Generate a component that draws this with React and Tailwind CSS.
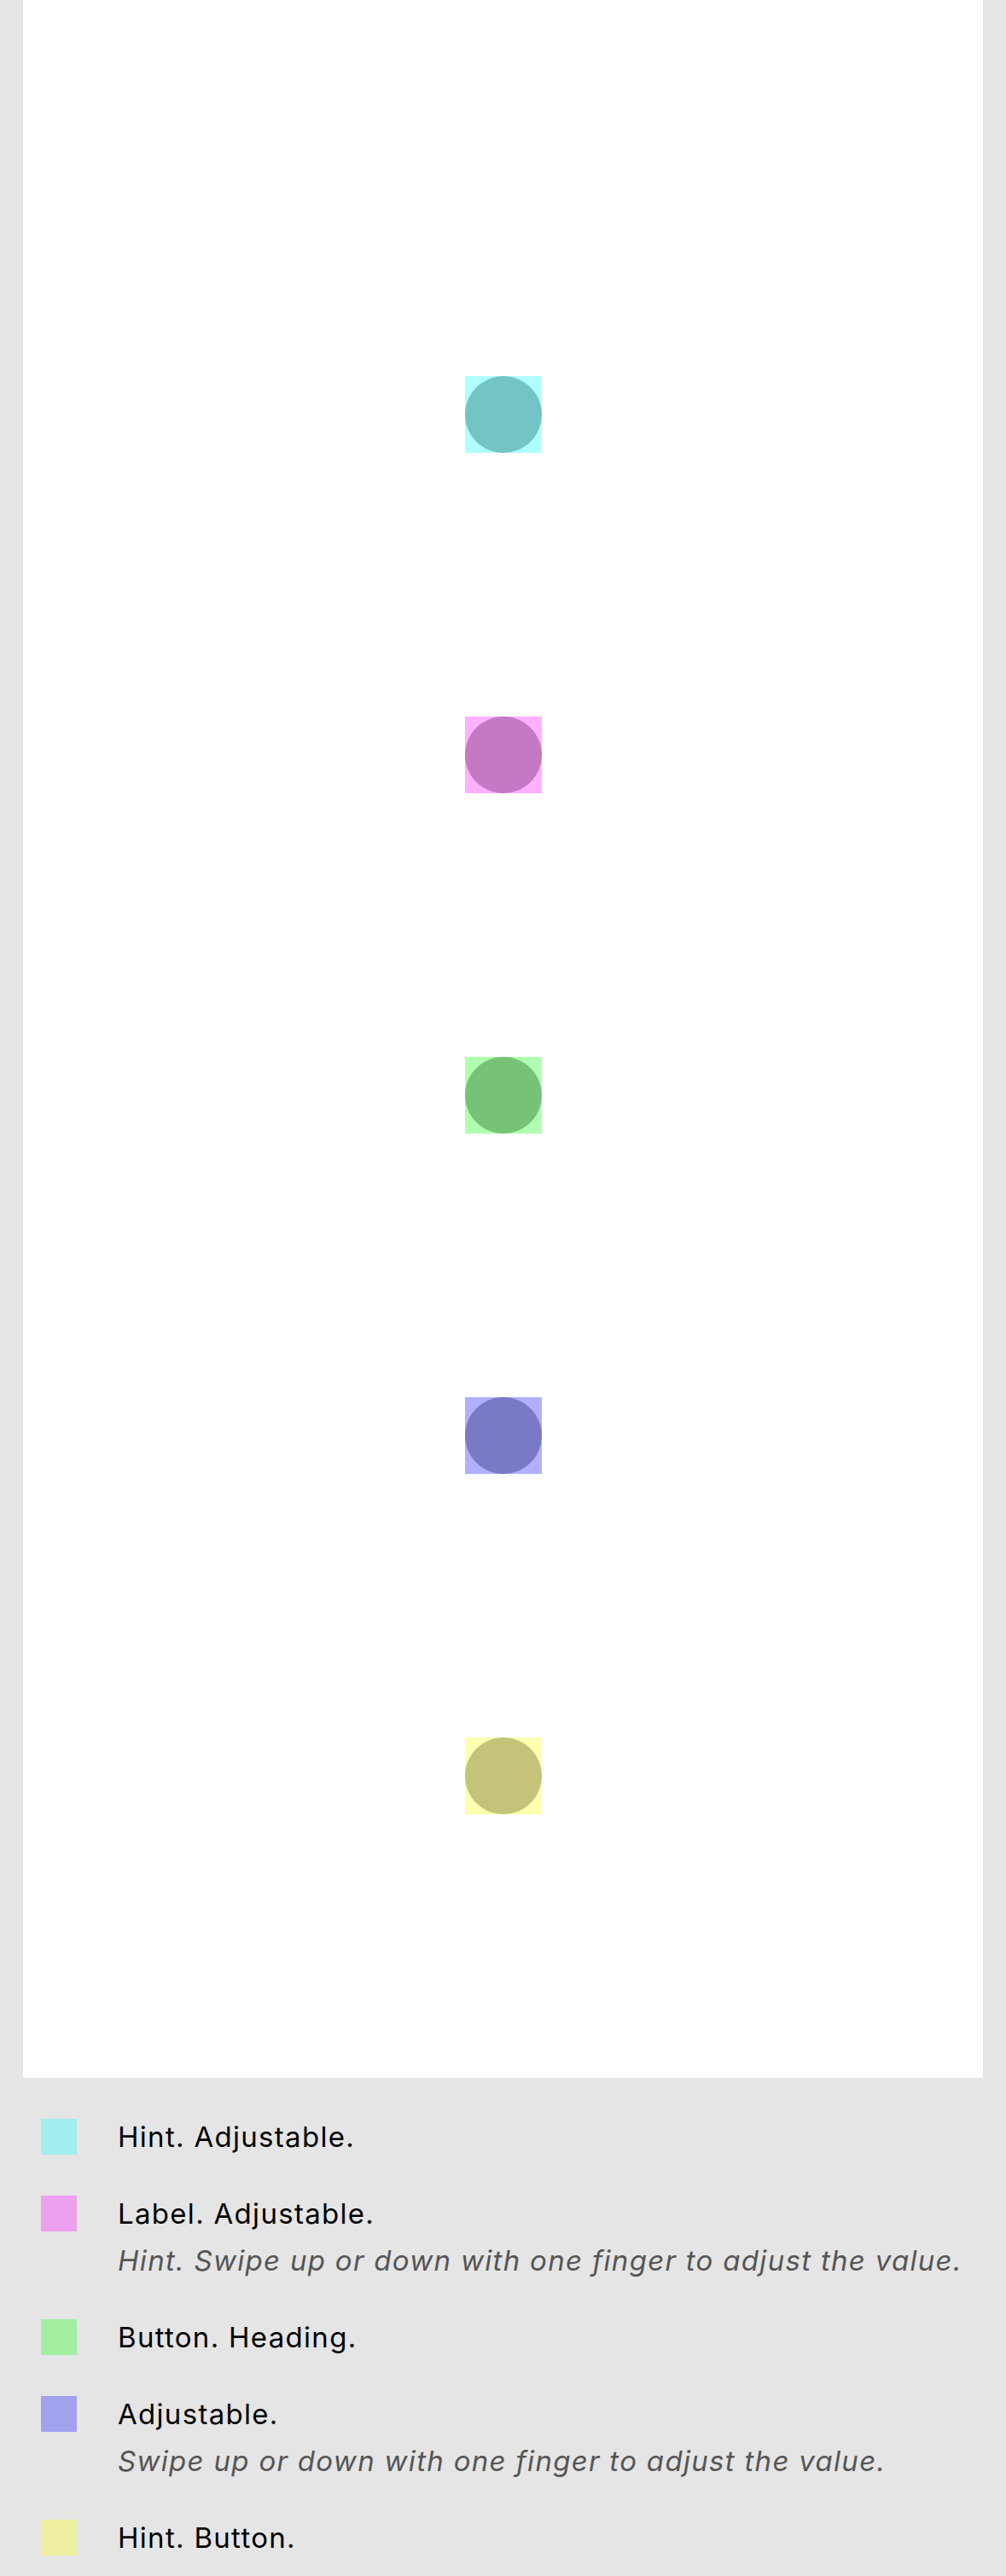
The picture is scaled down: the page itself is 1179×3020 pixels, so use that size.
import React from "react";

const targets = [
  { sq: "bg-[#b0ffff]", dot: "bg-[#73c4c4]" },
  { sq: "bg-[#ffb0ff]", dot: "bg-[#c379c3]" },
  { sq: "bg-[#b0ffb0]", dot: "bg-[#77c277]" },
  { sq: "bg-[#b0b0ff]", dot: "bg-[#7979c6]" },
  { sq: "bg-[#ffffb0]", dot: "bg-[#c3c379]" },
];

const legend = [
  { sw: "bg-[#a1eeee]", label: "Hint. Adjustable." },
  { sw: "bg-[#eda0ed]", label: "Label. Adjustable.", hint: "Hint. Swipe up or down with one finger to adjust the value." },
  { sw: "bg-[#a1eea1]", label: "Button. Heading." },
  { sw: "bg-[#a1a1ee]", label: "Adjustable.", hint: "Swipe up or down with one finger to adjust the value." },
  { sw: "bg-[#eeeea0]", label: "Hint. Button." },
];

export default function App() {
  return (
    <div
      className="w-[1179px] min-h-[3020px] bg-[#e5e5e5]"
      style={{ fontFamily: "Inter, 'Noto Sans', sans-serif" }}
    >
      <div className="mx-[27px] bg-white flex flex-col items-center pt-[441px] pb-[309px] gap-[309px]">
        {targets.map((t, i) => (
          <div key={i} className={`w-[90px] h-[90px] ${t.sq}`}>
            <div className={`w-[90px] h-[90px] rounded-full ${t.dot}`} />
          </div>
        ))}
      </div>
      <div className="flex flex-col gap-[48px] pt-[48px] pl-[48px] pb-[24px]">
        {legend.map((l, i) => (
          <div key={i} className="flex items-start gap-[48px]">
            <div className={`w-[42px] h-[42px] shrink-0 ${l.sw}`} />
            <div className="flex flex-col">
              <div className="text-[33px] leading-[42px] tracking-[1.3px] text-black">{l.label}</div>
              {l.hint && (
                <div className="mt-[13px] text-[33px] leading-[42px] tracking-[1.3px] italic text-[#555555]">
                  {l.hint}
                </div>
              )}
            </div>
          </div>
        ))}
      </div>
    </div>
  );
}
